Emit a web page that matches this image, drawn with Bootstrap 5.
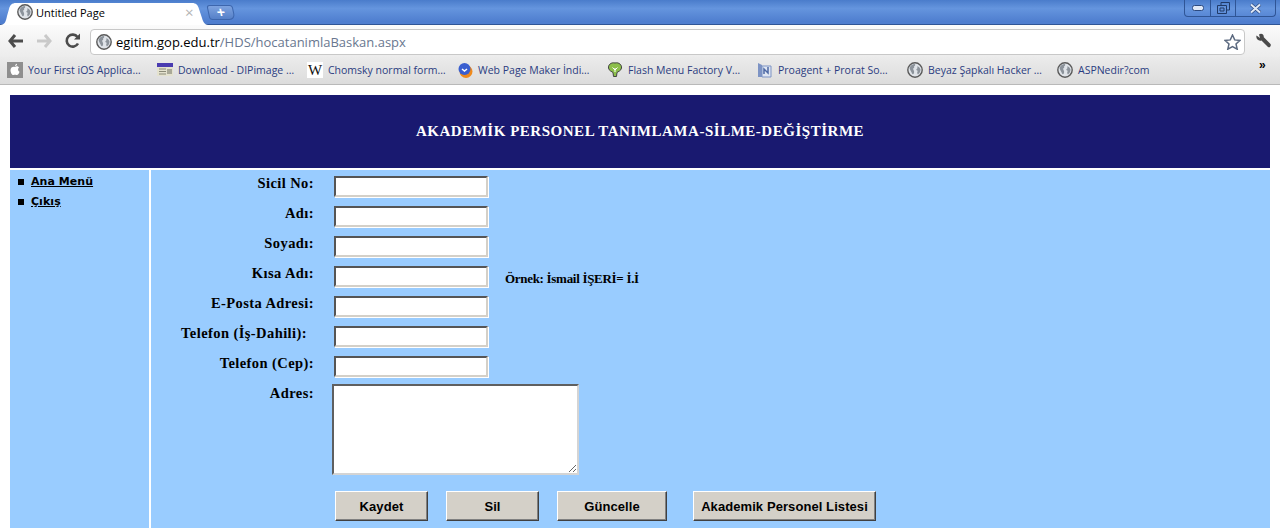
<!DOCTYPE html>
<html lang="tr">
<head>
  <meta charset="UTF-8" />
  <meta name="viewport" content="width=device-width, initial-scale=1.0"/>
  <title>Untitled Page</title>
  <link rel="stylesheet" href="https://cdn.jsdelivr.net/npm/bootstrap@5.3.2/dist/css/bootstrap.min.css" />
  <style>
    html, body { height: 530px; overflow: hidden; background: #fff; }
    body { font-family: "Liberation Serif", serif; color: #000; }

    /* browser chrome */
    .sekme-seridi { height: 25px; background: linear-gradient(#4a7ccb, #6595de 35%, #4f7ecf 90%); border-bottom: 1px solid #2f5596; }
    .sekme { position: relative; width: 208px; height: 22px; margin-top: 3px; background: #fff;
      clip-path: path("M0 22 C5 22 6 18 7 13 L9 6 C10 2 12 0 16 0 L192 0 C196 0 198 2 199 6 L202 15 C203 19 205 22 208 22 Z");
      font: 11px "Open Sans", sans-serif; padding: 0 0 4px 17px; gap: 3px; }
    .sekme-x { position: absolute; left: 185px; top: -1px; color: #b4b4b4; font-size: 15px; }
    .yeni-sekme { width: 26px; height: 15px; margin: 5px 0 0 0; background: linear-gradient(#7ea3e0, #5580c8); border: 1px solid #3d66ad; border-radius: 3px 3px 6px 3px; color: #fff; font: bold 14px/12px "Liberation Sans", sans-serif; text-align: center; transform: skewX(12deg); }
    .pencere { position: absolute; right: 4px; top: 0; height: 17px; width: 92px; border: 1px solid #2f5596; border-top: 0; border-radius: 0 0 4px 4px; }
    .pencere span { border-right: 1px solid #2f5596; }
    .pencere span:last-child { border-right: 0; }
    .arac-cubugu { height: 32px; background: linear-gradient(#fbfbfb, #ececec); }
    .adres { position: absolute; left: 90px; top: 29px; width: 1155px; height: 26px; background: #fff; border: 1px solid #c8c8c8; border-radius: 4px; padding-left: 5px; font: 13px "Open Sans", sans-serif; gap: 4px; color: #000; }
    .adres em { font-style: normal; color: #69778f; }
    .adres-yildiz { position: absolute; left: 1133px; top: 4px; }
    .yer-imleri { height: 28px; background: linear-gradient(#ebebeb, #dcdcdc); border-bottom: 1px solid #b9b9b9; padding: 0 0 2px 7px; font: 10.5px "Open Sans", sans-serif; color: #2b3c80; }
    .yer-imi { width: 150px; gap: 5px; white-space: nowrap; }
    .yer-imi svg { flex: none; }
    .vikipedi { flex: none; width: 16px; height: 16px; font: 15px/16px "Liberation Serif", serif; color: #111; }
    .daha { position: absolute; left: 1259px; top: 58px; font: bold 12px "Liberation Sans", sans-serif; color: #000; }

    /* page */
    .sayfa { padding: 10px 10px 0; }
    .baslik { height: 73px; background: #191970; color: #fff; font-weight: bold; font-size: 15px; letter-spacing: .52px; }
    .icerik { margin-top: 2px; height: 358px; gap: 2px; }
    .sol-menu { width: 139px; background: #9cf; padding: 2px 0 0 8px; font: bold 11px/20px "DejaVu Sans", sans-serif; letter-spacing: .05px; }
    .sol-menu li { gap: 7px; height: 20px; }
    .sol-menu li::before { content: ""; width: 6px; height: 6px; background: #000; }
    .sol-menu a { color: #000; line-height: 16px; }
    .form-alani { background: #9cf; padding-top: 5px; font-weight: bold; font-size: 14.5px; letter-spacing: .42px; }
    .satir { height: 30px; }
    .etiket { width: 163px; text-align: right; line-height: 16px; }
    .etiket-dar { padding-right: 7px; }
    .kutu { width: 154px; height: 21px; margin: 1px 0 0 20px; background: #fff; border: 2px solid; border-color: #555 #d4d0c8 #d4d0c8 #555; box-shadow: 1px 1px 0 #fff; padding: 0; }
    .ornek { margin: 6px 0 0 17px; font-size: 13px; letter-spacing: -.3px; line-height: 16px; }
    .adres-kutu { display: block; width: 247px; height: 91px; margin: -1px 0 0 18px; background: #fff; border: 2px solid; border-color: #5f5f5f #d4d4d4 #d4d4d4 #5f5f5f; padding: 0; }
    .dugmeler { margin: 16px 0 0 184px; }
    .dugme { height: 30px; background: #d4d0c8; border: 1px solid; border-color: #fff #404040 #404040 #fff; box-shadow: inset -1px -1px 0 #808080; padding: 0; font: bold 13px "Liberation Sans", sans-serif; letter-spacing: .08px; color: #000; }
  </style>
</head>
<body>
  <svg width="0" height="0" class="position-absolute">
    <symbol id="kure" viewBox="0 0 16 16">
      <circle cx="8" cy="8" r="7.2" fill="#dfe3e8" stroke="#5a5a5a" stroke-width="1.4"/>
      <path d="M2.500 6C3.500 3.500 5.500 2 8 2C8.500 3 8 4 7 4.500C7.500 5.500 7 6.500 6 6.500C6.500 8.500 7.500 9 7 11C6.500 12.500 5.500 12.500 5 11.500C4.500 10 3 8 2.500 6Z M10 4.500C11.500 4 13 5.500 13.500 7.500C13.500 9.500 12.500 11.500 11 12.500C10 11.500 10 10 10.800 9C10 8.500 9 8 9.500 7C10.500 6.800 10.800 5.500 10 4.500Z" fill="#8c939b"/>
    </symbol>
  </svg>

  <div class="sekme-seridi d-flex position-relative">
    <div class="sekme d-flex align-items-center ms-0">
      <svg width="16" height="16"><use href="#kure"/></svg>
      <span>Untitled Page</span>
      <span class="sekme-x">×</span>
    </div>
    <div class="yeni-sekme">+</div>
    <div class="pencere d-flex">
      <span class="d-flex align-items-center justify-content-center" style="width:26px">
        <svg width="12" height="6"><rect x=".5" y=".5" width="11" height="5" rx="2" fill="#dfe8f6" stroke="#2c4a80"/></svg>
      </span>
      <span class="d-flex align-items-center justify-content-center" style="width:25px">
        <svg width="13" height="12"><path d="M4 3V.5H12.500V8H10M.5 3.500H9.500V11.500H.5Z M3 6H7V9H3Z" fill="none" stroke="#203a68"/></svg>
      </span>
      <span class="d-flex align-items-center justify-content-center flex-fill">
        <svg width="13" height="11"><path d="M2 1.500L11 9.500M11 1.500L2 9.500" stroke="#2c4a80" stroke-width="3.500"/><path d="M2 1.500L11 9.500M11 1.500L2 9.500" stroke="#dfe8f6" stroke-width="2"/></svg>
      </span>
    </div>
  </div>

  <div class="arac-cubugu d-flex align-items-center position-relative">
    <svg class="ms-2" width="16" height="14" viewBox="0 0 16 14"><path d="M7 1L2 7L7 13M2 7H15" fill="none" stroke="#4c4c4c" stroke-width="3"/></svg>
    <svg style="margin-left:12px" width="16" height="14" viewBox="0 0 16 14"><path d="M9 1L14 7L9 13M14 7H1" fill="none" stroke="#c9c9c9" stroke-width="3"/></svg>
    <svg style="margin-left:13px" width="16" height="16" viewBox="0 0 16 16"><path d="M13 10.500A6 6 0 1 1 12.500 4" fill="none" stroke="#4c4c4c" stroke-width="2.600"/><path d="M9 6.500H15V.5Z" fill="#4c4c4c"/></svg>
    <svg class="position-absolute" style="left:1255px;top:8px" width="17" height="16" viewBox="0 0 17 16"><path d="M1.500 2.500L5 5L4 1.500C6-.2 9 1 8.800 4.200L15.500 11C16.500 12 15 15.500 13 14L6.500 7.500C3.500 8.500.5 6 1.500 2.500Z" fill="#4a4a4a"/></svg>
  </div>
  <div class="adres d-flex align-items-center">
    <svg width="16" height="16"><use href="#kure"/></svg>
    <span>egitim.gop.edu.tr<em>/HDS/hocatanimlaBaskan.aspx</em></span>
    <svg class="adres-yildiz" width="17" height="16" viewBox="0 0 17 16"><path d="M8.500 1L10.700 5.900L16 6.400L12 10L13.200 15.200L8.500 12.500L3.800 15.200L5 10L1 6.400L6.300 5.900Z" fill="#fff" stroke="#5c6a80" stroke-width="1.500"/></svg>
  </div>

  <div class="yer-imleri d-flex align-items-center">
    <div class="yer-imi d-flex align-items-center">
      <svg width="16" height="16" viewBox="0 0 16 16"><rect width="16" height="16" fill="#8f8f8f"/><path d="M8 5C9 4 11 4 12 5.500C10.500 6.500 10.800 9 12.500 9.700C12 11.500 10.800 13.500 9.500 13C8.500 12.600 7.500 12.600 6.500 13C5 13.500 3.500 10.500 3.500 8C3.500 5 6.500 4 8 5ZM8 4C8 2.800 9 1.800 10 1.700C10.200 3 9.200 4 8 4Z" fill="#fff"/></svg>
      <span>Your First iOS Applica…</span>
    </div>
    <div class="yer-imi d-flex align-items-center">
      <svg width="16" height="16" viewBox="0 0 16 16"><rect y="1" width="16" height="4" fill="#4a3cb0"/><rect y="5" width="16" height="9" fill="#e4e2cf"/><path d="M2 7H9M2 9.500H9M2 12H9" stroke="#8a8a78"/><rect x="10" y="7" width="5" height="5" fill="#a9a998"/></svg>
      <span>Download - DIPimage …</span>
    </div>
    <div class="yer-imi d-flex align-items-center">
      <span class="vikipedi d-flex justify-content-center bg-white">W</span>
      <span>Chomsky normal form…</span>
    </div>
    <div class="yer-imi d-flex align-items-center">
      <svg width="16" height="16" viewBox="0 0 16 16"><circle cx="9" cy="9.500" r="6.500" fill="#f08a1c"/><circle cx="7.500" cy="7" r="6" fill="#3a5fd0"/><path d="M5 7L7.500 9L10 7" fill="none" stroke="#fff" stroke-width="1.500"/></svg>
      <span>Web Page Maker İndi…</span>
    </div>
    <div class="yer-imi d-flex align-items-center">
      <svg width="16" height="16" viewBox="0 0 16 16"><path d="M8 1C12 0 15 3 14.500 6C14 9 11 9.500 10 10.500L9.500 14.500H6.500L6 10.500C5 9.500 2 9 1.500 6C1 3 4 0 8 1Z" fill="#8cbf4a" stroke="#444"/><path d="M8 10V6M8 8L5.500 5.500M8 8L10.500 5.500" stroke="#fff"/></svg>
      <span>Flash Menu Factory V…</span>
    </div>
    <div class="yer-imi d-flex align-items-center">
      <svg width="16" height="16" viewBox="0 0 16 16"><path d="M1 1L5 3V15H1Z" fill="#7d93c4"/><path d="M5 4H14V15H5Z" fill="#dfe6f2" stroke="#7d93c4"/><path d="M7 12V7L11 11V5" fill="none" stroke="#4f6aa5" stroke-width="1.500"/></svg>
      <span>Proagent + Prorat So…</span>
    </div>
    <div class="yer-imi d-flex align-items-center">
      <svg width="16" height="16"><use href="#kure"/></svg>
      <span>Beyaz Şapkalı Hacker …</span>
    </div>
    <div class="yer-imi d-flex align-items-center">
      <svg width="16" height="16"><use href="#kure"/></svg>
      <span>ASPNedir?com</span>
    </div>
  </div>
  <div class="daha">»</div>

  <div class="sayfa">
    <div class="baslik d-flex align-items-center justify-content-center">AKADEMİK PERSONEL TANIMLAMA-SİLME-DEĞİŞTİRME</div>
    <div class="icerik d-flex">
      <div class="sol-menu">
        <ul class="list-unstyled m-0">
          <li class="d-flex align-items-center"><a href="#">Ana Menü</a></li>
          <li class="d-flex align-items-center"><a href="#">Çıkış</a></li>
        </ul>
      </div>
      <form class="form-alani flex-fill">
        <div class="satir d-flex"><label class="etiket">Sicil No:</label><input class="kutu" type="text"></div>
        <div class="satir d-flex"><label class="etiket">Adı:</label><input class="kutu" type="text"></div>
        <div class="satir d-flex"><label class="etiket">Soyadı:</label><input class="kutu" type="text"></div>
        <div class="satir d-flex"><label class="etiket">Kısa Adı:</label><input class="kutu" type="text"><span class="ornek">Örnek: İsmail İŞERİ= İ.İ</span></div>
        <div class="satir d-flex"><label class="etiket">E-Posta Adresi:</label><input class="kutu" type="text"></div>
        <div class="satir d-flex"><label class="etiket etiket-dar">Telefon (İş-Dahili):</label><input class="kutu" type="text"></div>
        <div class="satir d-flex"><label class="etiket">Telefon (Cep):</label><input class="kutu" type="text"></div>
        <div class="d-flex"><label class="etiket">Adres:</label><textarea class="adres-kutu"></textarea></div>
        <div class="dugmeler d-flex">
          <button type="button" class="dugme me-3" style="width:93px">Kaydet</button>
          <button type="button" class="dugme" style="width:93px;margin:0 18px 0 2px">Sil</button>
          <button type="button" class="dugme" style="width:110px;margin-right:26px">Güncelle</button>
          <button type="button" class="dugme" style="width:183px">Akademik Personel Listesi</button>
        </div>
      </form>
    </div>
  </div>
  <script src="https://cdn.jsdelivr.net/npm/bootstrap@5.3.2/dist/js/bootstrap.bundle.min.js"></script>
</body>
</html>
